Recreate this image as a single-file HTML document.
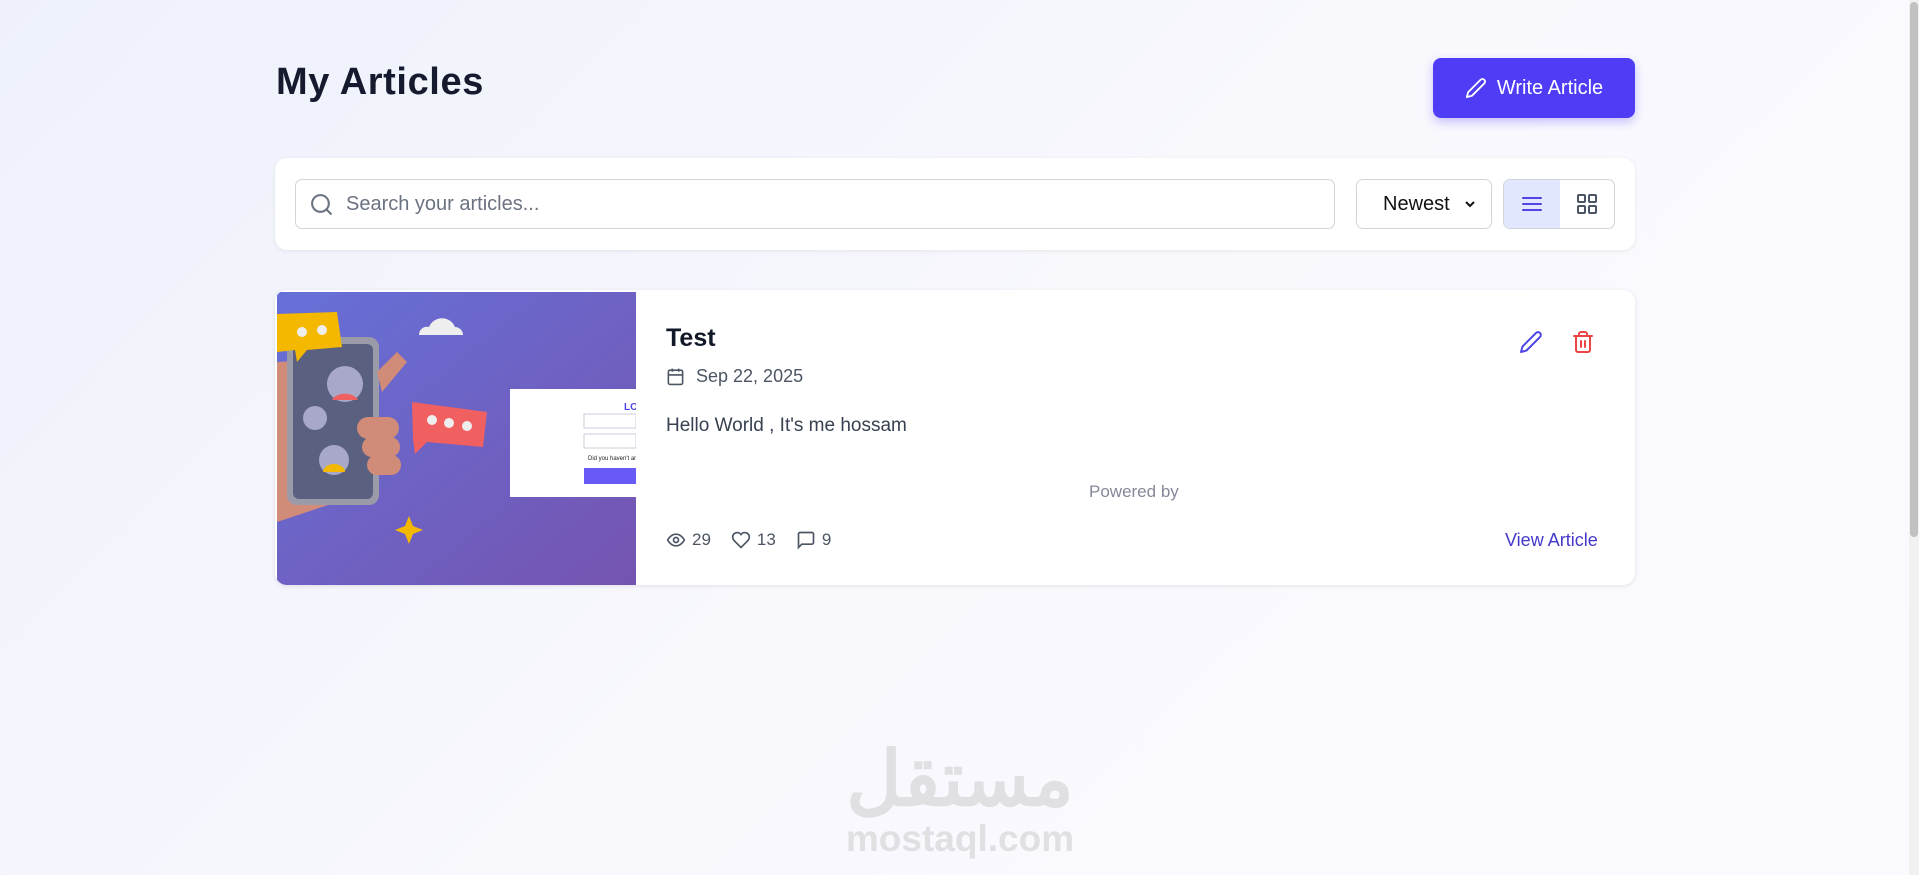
<!DOCTYPE html>
<html><head><meta charset="utf-8"><style>
*{box-sizing:border-box;margin:0;padding:0}
html,body{width:1919px;height:875px;overflow:hidden}
body{font-family:"Liberation Sans",sans-serif;background:linear-gradient(135deg,#eef1fc 0%,#f8f8fd 50%,#fbfaff 100%);position:relative;color:#111827}
.abs{position:absolute}
h1{position:absolute;left:276px;top:61px;font-size:38px;font-weight:700;color:#161a2e;letter-spacing:0.6px}
.btn{left:1433px;top:58px;width:202px;height:60px;background:#4f3df5;border-radius:8px;color:#fff;font-size:20px;display:flex;align-items:center;justify-content:center;gap:10px;box-shadow:0 4px 10px rgba(79,61,245,.3)}
.bar{left:275px;top:158px;width:1360px;height:92px;background:#fff;border-radius:12px;box-shadow:0 1px 4px rgba(0,0,0,.08)}
.search{left:295px;top:179px;width:1040px;height:50px;border:1px solid #d1d5db;border-radius:7px;background:#fff;display:flex;align-items:center;padding-left:50px;font-size:20px;color:#6b7280}
.sel{left:1356px;top:179px;width:136px;height:50px;border:1px solid #d1d5db;border-radius:7px;font-size:20px;color:#111;display:flex;align-items:center;padding-left:26px}
.tog{left:1503px;top:179px;width:112px;height:50px;border:1px solid #d1d5db;border-radius:7px;overflow:hidden;display:flex}
.card{left:275px;top:290px;width:1360px;height:295px;background:#fff;border-radius:12px;box-shadow:0 1px 4px rgba(0,0,0,.1);overflow:hidden}
.t{font-size:25px;font-weight:700;color:#111827}
.g{color:#4b5563;font-size:18px}
</style></head><body>
<h1>My Articles</h1>
<div class="abs btn"><svg width="22" height="22" viewBox="0 0 24 24" fill="none" stroke="#fff" stroke-width="2" stroke-linecap="round" stroke-linejoin="round"><path d="M17 3a2.8 2.8 0 0 1 4 4L7.5 20.5 2 22l1.5-5.5Z"/></svg>Write Article</div>
<div class="abs bar"></div>
<div class="abs search">Search your articles...</div>
<svg class="abs" style="left:309px;top:192px" width="25" height="25" viewBox="0 0 24 24" fill="none" stroke="#6b7280" stroke-width="2" stroke-linecap="round"><circle cx="11" cy="11" r="8"/><path d="m21 21-4.3-4.3"/></svg>
<div class="abs sel">Newest<svg style="margin-left:14px" width="12" height="12" viewBox="0 0 12 12"><path d="M2 4l4 4 4-4" fill="none" stroke="#111" stroke-width="2"/></svg></div>
<div class="abs tog"><div style="width:56px;background:#e0e7ff;display:flex;align-items:center;justify-content:center"><svg width="24" height="24" viewBox="0 0 24 24" stroke="#4f46e5" stroke-width="2" stroke-linecap="round"><path d="M3 6h18M3 12h18M3 18h18"/></svg></div><div style="flex:1;display:flex;align-items:center;justify-content:center"><svg width="24" height="24" viewBox="0 0 24 24" fill="none" stroke="#4b5563" stroke-width="2"><rect x="3" y="3" width="7" height="7" rx="1"/><rect x="14" y="3" width="7" height="7" rx="1"/><rect x="3" y="14" width="7" height="7" rx="1"/><rect x="14" y="14" width="7" height="7" rx="1"/></svg></div></div>
<div class="abs card">
<svg class="abs" style="left:2px;top:2px" width="359" height="293" viewBox="0 0 359 293">
<defs><linearGradient id="bg" x1="0" y1="0" x2="1" y2="1"><stop offset="0" stop-color="#6670d8"/><stop offset="1" stop-color="#7554b0"/></linearGradient></defs>
<rect width="359" height="293" fill="url(#bg)"/>
<path d="M0 70 L40 68 L60 80 L60 210 L0 230Z" fill="#d08c78"/>
<rect x="10" y="45" width="92" height="168" rx="10" fill="#9a9aa8"/>
<rect x="16" y="52" width="80" height="155" rx="6" fill="#5a6080"/>
<path d="M100 80 L120 60 L130 70 L105 100Z" fill="#d08c78"/>
<rect x="80" y="125" width="42" height="22" rx="11" fill="#d08c78"/><rect x="85" y="145" width="38" height="20" rx="10" fill="#d08c78"/><rect x="90" y="163" width="34" height="20" rx="10" fill="#d08c78"/>
<circle cx="68" cy="92" r="18" fill="#a8a8c8"/><path d="M55 108a14 10 0 0 1 26 0Z" fill="#f06060"/>
<circle cx="38" cy="126" r="12" fill="#a8a8c8"/><circle cx="57" cy="168" r="15" fill="#a8a8c8"/><path d="M46 180a11 8 0 0 1 22 0Z" fill="#f5b800"/>
<path d="M0 22 L60 20 L65 55 L30 58 L20 70 L18 58 L0 60Z" fill="#f5b800"/>
<circle cx="25" cy="40" r="5" fill="#eee"/><circle cx="45" cy="38" r="5" fill="#eee"/>
<path d="M135 110 L210 120 L206 155 L150 150 L138 162 L136 147Z" fill="#f06060"/>
<circle cx="155" cy="128" r="5" fill="#eee"/><circle cx="172" cy="131" r="5" fill="#eee"/><circle cx="190" cy="134" r="5" fill="#eee"/>
<path d="M142 43 a8 8 0 0 1 10 -8 a14 14 0 0 1 26 0 a8 8 0 0 1 8 8Z" fill="#eee"/>
<path d="M132 224 l4 10 10 4 -10 4 -4 10 -4 -10 -10 -4 10 -4Z" fill="#f5b800"/>
<rect x="233" y="97" width="126" height="108" fill="#fff"/>
<text x="347" y="118" font-size="10" fill="#4f46e5" font-family="Liberation Sans" font-weight="700">LO</text>
<rect x="307" y="122" width="52" height="14" fill="#fff" stroke="#ccd"/><rect x="307" y="142" width="52" height="14" fill="#fff" stroke="#ccd"/>
<text x="311" y="168" font-size="6" fill="#222" font-family="Liberation Sans">Did you haven't an</text>
<rect x="307" y="176" width="52" height="16" fill="#6a5af5"/>
</svg>
<div class="abs t" style="left:391px;top:34px">Test</div>
<svg class="abs" style="left:391px;top:77px" width="19" height="19" viewBox="0 0 24 24" fill="none" stroke="#4b5563" stroke-width="2"><rect x="3" y="4" width="18" height="18" rx="2"/><path d="M16 2v4M8 2v4M3 10h18"/></svg>
<div class="abs g" style="left:421px;top:76px">Sep 22, 2025</div>
<div class="abs" style="left:391px;top:125px;font-size:19px;color:#374151">Hello World , It's me hossam</div>
<div class="abs" style="left:814px;top:192px;font-size:17px;color:#858899">Powered by</div>
<div class="abs g" style="left:391px;top:240px;display:flex;align-items:center;gap:6px;font-size:17px">
<svg width="20" height="20" viewBox="0 0 24 24" fill="none" stroke="#4b5563" stroke-width="2"><path d="M2 12s3.5-7 10-7 10 7 10 7-3.5 7-10 7S2 12 2 12Z"/><circle cx="12" cy="12" r="3"/></svg>29
<svg style="margin-left:14px" width="20" height="20" viewBox="0 0 24 24" fill="none" stroke="#4b5563" stroke-width="2"><path d="M19 14c1.5-1.5 3-3.2 3-5.5A5.5 5.5 0 0 0 12 5.5 5.5 5.5 0 0 0 2 8.5c0 2.3 1.5 4 3 5.5l7 7Z"/></svg>13
<svg style="margin-left:14px" width="20" height="20" viewBox="0 0 24 24" fill="none" stroke="#4b5563" stroke-width="2"><path d="M21 15a2 2 0 0 1-2 2H7l-4 4V5a2 2 0 0 1 2-2h14a2 2 0 0 1 2 2z"/></svg>9</div>
<div class="abs" style="left:1230px;top:240px;font-size:18px;color:#4338ca">View Article</div>
<svg class="abs" style="left:1244px;top:40px" width="24" height="24" viewBox="0 0 24 24" fill="none" stroke="#4f46e5" stroke-width="2" stroke-linecap="round" stroke-linejoin="round"><path d="M17 3a2.8 2.8 0 0 1 4 4L7.5 20.5 2 22l1.5-5.5Z"/></svg>
<svg class="abs" style="left:1296px;top:40px" width="24" height="24" viewBox="0 0 24 24" fill="none" stroke="#ef4444" stroke-width="2" stroke-linecap="round"><path d="M3 6h18M19 6v14a2 2 0 0 1-2 2H7a2 2 0 0 1-2-2V6M8 6V4a2 2 0 0 1 2-2h4a2 2 0 0 1 2 2v2M10 11v6M14 11v6"/></svg>
</div>
<div class="abs" style="left:810px;top:735px;width:300px;text-align:center;font-size:76px;font-weight:700;color:#e0e0e3;font-family:'Liberation Sans','Noto Sans CJK SC',sans-serif;line-height:90px">مستقل</div>
<div class="abs" style="left:810px;top:818px;width:300px;text-align:center;font-size:37px;font-weight:700;color:#e0e0e3">mostaql.com</div>
<div class="abs" style="left:1909px;top:0;width:10px;height:875px;background:#f1f1f1"></div>
<div class="abs" style="left:1910px;top:2px;width:8px;height:535px;background:#c1c1c1;border-radius:4px"></div>
</body></html>
